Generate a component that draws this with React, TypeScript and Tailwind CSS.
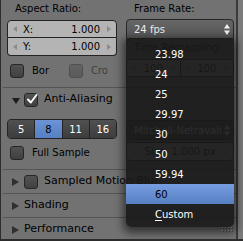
import React from "react";

function ArrowL({ color = "#8a8a8a" }: { color?: string }) {
  return (
    <svg width="4" height="6" viewBox="0 0 4 6" className="shrink-0">
      <polygon points="4,0 0,3 4,6" fill={color} />
    </svg>
  );
}
function ArrowR({ color = "#8a8a8a" }: { color?: string }) {
  return (
    <svg width="4" height="6" viewBox="0 0 4 6" className="shrink-0">
      <polygon points="0,0 4,3 0,6" fill={color} />
    </svg>
  );
}
function UpDown() {
  return (
    <svg width="6" height="11" viewBox="0 0 6 11" className="shrink-0">
      <polygon points="0,4.5 3,0 6,4.5" fill="#f0f0f0" />
      <polygon points="0,6.5 3,11 6,6.5" fill="#f0f0f0" />
    </svg>
  );
}
function Grip() {
  const dots: React.ReactNode[] = [];
  [0, 3, 6, 9].forEach((x) =>
    [0, 3].forEach((y) => {
      dots.push(<rect key={`d${x}-${y}`} x={x + 1} y={y + 1} width="1" height="1" fill="#4a4a4a" />);
      dots.push(<rect key={`l${x}-${y}`} x={x} y={y} width="1" height="1" fill="#a6a6a6" />);
    })
  );
  return (
    <svg width="11" height="5" viewBox="0 0 11 5" className="ml-auto mr-[3px] shrink-0">
      {dots}
    </svg>
  );
}
function Box({ checked = false }: { checked?: boolean }) {
  return (
    <div className="relative w-[14px] h-[14px] shrink-0 rounded-[3px] border border-[#262626] bg-gradient-to-b from-[#525252] to-[#404040]">
      {checked && (
        <svg width="12" height="11" viewBox="0 0 12 11" className="absolute left-[1px] top-[0px]">
          <path d="M2 5.5 L4.8 8.5 L10.5 1" stroke="#ffffff" strokeWidth="1.9" fill="none" strokeLinecap="round" strokeLinejoin="round" />
        </svg>
      )}
    </div>
  );
}
function Label({ text }: { text: string }) {
  return <div className="shrink-0 mt-[3px] h-[12px] leading-[12px] pl-[8px] text-[10px] whitespace-nowrap">{text}</div>;
}

function Header({ title, open = false, check = false, checked = false }: { title: string; open?: boolean; check?: boolean; checked?: boolean }) {
  return (
    <div className="shrink-0 h-[24px] ml-[2px] border-t border-[#545454] flex items-center pl-[9px] text-[11px] whitespace-nowrap">
      {open ? (
        <svg width="8" height="6" viewBox="0 0 8 6" className="shrink-0 mt-[2px]">
          <polygon points="0,0 8,0 4,6" fill="#1c1c1c" />
        </svg>
      ) : (
        <svg width="7" height="8" viewBox="0 0 7 8" className="shrink-0">
          <polygon points="0,0 7,4 0,8" fill="#2f2f2f" />
        </svg>
      )}
      {check ? (
        <>
          <div className={open ? "ml-[4px]" : "ml-[5px]"}>
            <Box checked={checked} />
          </div>
          <span className="ml-[6px]">{title}</span>
        </>
      ) : (
        <span className="ml-[5px]">{title}</span>
      )}
      <Grip />
    </div>
  );
}

const items = ["23.98", "24", "25", "29.97", "30", "50", "59.94", "60"];

export default function App() {
  return (
    <div className="relative flex w-[243px] h-[241px] overflow-hidden bg-[#727272] border-b-2 border-[#2c2c2c] font-['DejaVu_Sans',sans-serif] text-black">
      <div className="flex flex-col w-[236px] shrink-0 border-l border-[#2e2e2e]">
        {/* Dimensions panel tail */}
        <div className="shrink-0 flex h-[87px] pl-[6px] gap-[9px]">
          <div className="flex flex-col w-[110px]">
            <Label text="Aspect Ratio:" />
            <div className="shrink-0 mt-[5px] flex flex-col text-[10px]">
              <div className="h-[18px] flex items-center border border-[#232323] rounded-t-[4px] bg-[#b4b4b4] pl-[5px] pr-[5px]">
                <ArrowL />
                <span className="ml-[6px]">X:</span>
                <span className="ml-auto mr-[7px]">1.000</span>
                <ArrowR />
              </div>
              <div className="h-[18px] flex items-center border-x border-b border-[#232323] rounded-b-[4px] bg-[#b4b4b4] pl-[5px] pr-[5px]">
                <ArrowL />
                <span className="ml-[6px]">Y:</span>
                <span className="ml-auto mr-[7px]">1.000</span>
                <ArrowR />
              </div>
            </div>
            <div className="shrink-0 mt-[5px] h-[19px] flex items-center pl-[3px] text-[10px]">
              <div className="flex items-center w-[59px]">
                <Box />
                <span className="ml-[8px]">Bor</span>
              </div>
              <div className="flex items-center opacity-[0.45]">
                <Box />
                <span className="ml-[8px]">Cro</span>
              </div>
            </div>
          </div>
          <div className="flex flex-col w-[108px]">
            <Label text="Frame Rate:" />
            <div className="shrink-0 mt-[4px] h-[20px] flex items-center border border-[#262626] rounded-t-[4px] bg-gradient-to-b from-[#666666] to-[#555555] pl-[7px] pr-[3px] text-[10px] text-[#ececec]">
              <span>24 fps</span>
              <span className="ml-auto">
                <UpDown />
              </span>
            </div>
            <div className="shrink-0 mt-[3px] h-[12px] leading-[12px] pl-[8px] text-[10px] whitespace-nowrap">Time Remapping:</div>
            <div className="shrink-0 mt-[5px] h-[18px] flex text-[10px]">
              <div className="flex-1 flex items-center border border-[#232323] rounded-l-[4px] bg-[#b4b4b4] px-[4px]">
                <ArrowL />
                <span className="flex-1 text-center">100</span>
                <ArrowR />
              </div>
              <div className="flex-1 flex items-center border-y border-r border-[#232323] rounded-r-[4px] bg-[#b4b4b4] px-[4px]">
                <ArrowL />
                <span className="flex-1 text-center">100</span>
                <ArrowR />
              </div>
            </div>
          </div>
        </div>

        <Header title="Anti-Aliasing" open check checked />

        <div className="shrink-0 flex h-[58px] pl-[6px] gap-[9px] pt-[8px]">
          <div className="flex flex-col w-[110px]">
            <div className="shrink-0 h-[20px] flex rounded-[4px] border border-[#232323] overflow-hidden text-[10px]">
              <div className="flex-1 flex items-center justify-center bg-gradient-to-b from-[#505050] to-[#3d3d3d] text-white">5</div>
              <div className="flex-1 flex items-center justify-center border-l border-[#232323] bg-gradient-to-b from-[#6b93d6] to-[#5680c2] text-black">8</div>
              <div className="flex-1 flex items-center justify-center border-l border-[#232323] bg-gradient-to-b from-[#505050] to-[#3d3d3d] text-white">11</div>
              <div className="flex-1 flex items-center justify-center border-l border-[#232323] bg-gradient-to-b from-[#505050] to-[#3d3d3d] text-white">16</div>
            </div>
            <div className="shrink-0 mt-[4px] h-[19px] flex items-center pl-[3px] text-[10px]">
              <Box />
              <span className="ml-[8px]">Full Sample</span>
            </div>
          </div>
          <div className="flex flex-col w-[108px] pt-[1px] text-[10px]">
            <div className="shrink-0 h-[20px] flex items-center border border-[#262626] rounded-[4px] bg-gradient-to-b from-[#555555] to-[#464646] pl-[7px] pr-[3px] text-white whitespace-nowrap">
              <span>Mitchell-Netravali</span>
              <span className="ml-auto">
                <UpDown />
              </span>
            </div>
            <div className="shrink-0 mt-[2px] h-[19px] flex items-center border border-[#232323] rounded-[4px] bg-[#b4b4b4] px-[4px] whitespace-nowrap">
              <ArrowL />
              <span className="flex-1 text-center">Size: 1.000 px</span>
              <ArrowR />
            </div>
          </div>
        </div>

        <Header title="Sampled Motion Blur" check />
        <Header title="Shading" />
        <Header title="Performance" />
      </div>
      <div className="w-[2px] shrink-0 bg-[#3a3a3a]" />
      <div className="flex-1 bg-[#7b7b7b]" />

      {/* open pulldown menu */}
      <div className="absolute left-[126px] top-[39px] w-[108px] h-[188px] pt-[5px] rounded-b-[5px] bg-[rgba(25,25,25,0.92)] shadow-[0_3px_8px_3px_rgba(0,0,0,0.55)] text-[10px] text-white">
        {items.map((it) => (
          <div
            key={it}
            className={
              it === "60"
                ? "h-[20px] flex items-center pl-[29px] bg-gradient-to-b from-[#769de0] to-[#5680c2] text-black"
                : "h-[20px] flex items-center pl-[29px]"
            }
          >
            {it}
          </div>
        ))}
        <div className="h-[20px] flex items-center pl-[29px]">
          <span className="underline underline-offset-2">C</span>ustom
        </div>
      </div>
    </div>
  );
}
